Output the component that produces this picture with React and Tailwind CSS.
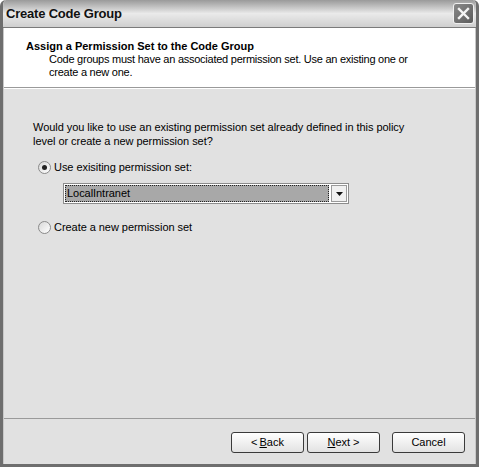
import React from "react";

function Radio({ checked }) {
  return (
    <span className="relative inline-block w-[13px] h-[13px] rounded-full border border-[#8a8a8a] bg-gradient-to-br from-[#d8d8d8] to-white shrink-0">
      {checked && <span className="absolute left-[3px] top-[3px] w-[5px] h-[5px] rounded-full bg-[#222]" />}
    </span>
  );
}

function Btn({ children }) {
  return (
    <button className="w-[73px] h-[21px] rounded-[3px] border border-[#3a3a3a] bg-gradient-to-b from-white to-[#e2e2e2] text-[11px] text-black flex items-center justify-center">
      {children}
    </button>
  );
}

export default function App() {
  return (
    <div className="w-[479px] h-[467px] bg-white font-['Liberation_Sans',Arial,sans-serif] text-black">
      <div className="w-full h-full rounded-t-[6px] border-x-[3px] border-b-[3px] border-[#6e6e6e] flex flex-col overflow-hidden">
        {/* title bar */}
        <div className="h-[28px] shrink-0 flex items-center justify-between pl-[3px] pr-[2px] bg-gradient-to-b from-[#9a9a9a] via-[#eaeaea] to-[#cfcfcf] border-b border-[#7a7a7a]">
          <span className="font-bold text-[13px] tracking-[-0.2px] text-[#111]">Create Code Group</span>
          <span className="w-[21px] h-[21px] rounded-[3px] bg-gradient-to-br from-[#8a8a8a] to-[#5c5c5c] border border-[#f0f0f0] flex items-center justify-center">
            <svg width="13" height="13" viewBox="0 0 13 13">
              <path d="M2 2 L11 11 M11 2 L2 11" stroke="#f4f4f4" strokeWidth="2.4" strokeLinecap="square" />
            </svg>
          </span>
        </div>
        <div className="flex-1 flex flex-col border-l border-r border-[#c8c8c8]">
          {/* header */}
          <div className="h-[60px] shrink-0 bg-white pl-[22px] pt-[11px] border-b border-[#9a9a9a]">
            <div className="font-bold text-[11px] leading-[14px]">Assign a Permission Set to the Code Group</div>
            <div className="pl-[23px] text-[11px] leading-[13px] tracking-[-0.25px]">
              Code groups must have an associated permission set. Use an existing one or<br />create a new one.
            </div>
          </div>
          {/* body */}
          <div className="flex-1 bg-[#e1e1e1] border-t border-white pl-[29px] pt-[31px] text-[11px] tracking-[-0.05px]">
            <div className="leading-[14px]">
              Would you like to use an existing permission set already defined in this policy<br />level or create a new permission set?
            </div>
            <div className="mt-[12px] pl-[5px] flex items-center gap-[3px] h-[14px]">
              <Radio checked />
              <span>Use exisiting permission set:</span>
            </div>
            <div className="mt-[9px] ml-[30px] w-[286px] h-[21px] border border-[#8c8c8c] bg-white flex items-center p-[1px]">
              <div className="flex-1 h-full bg-[#a8a8a8] border border-dotted border-[#222] flex items-center pl-[1px]">LocalIntranet</div>
              <div className="w-[16px] h-full ml-[2px] border border-[#9a9a9a] bg-[#f0f0f0] flex items-center justify-center">
                <svg width="7" height="4" viewBox="0 0 7 4"><path d="M0 0 H7 L3.5 4 Z" fill="#111" /></svg>
              </div>
            </div>
            <div className="mt-[16px] pl-[5px] flex items-center gap-[3px] h-[14px]">
              <Radio />
              <span>Create a new permission set</span>
            </div>
          </div>
          {/* footer */}
          <div className="h-[46px] shrink-0 bg-[#e1e1e1] border-t border-[#9a9a9a] flex items-center justify-end gap-[3px] pr-[10px] pt-[2px]">
            <Btn>&lt; <span className="ml-[2px]"><span className="underline">B</span>ack</span></Btn>
            <Btn><span className="underline">N</span>ext &gt;</Btn>
            <div className="w-[6px]" />
            <Btn>Cancel</Btn>
          </div>
        </div>
      </div>
    </div>
  );
}
